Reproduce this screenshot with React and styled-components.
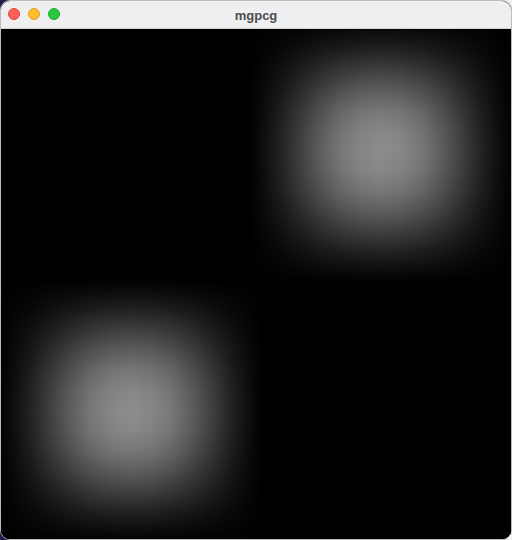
import React from 'react';
import styled, { createGlobalStyle } from 'styled-components';

const GlobalStyle = createGlobalStyle`
    html, body {
        margin: 0;
        padding: 0;
        width: 512px;
        height: 540px;
        overflow: hidden;
        background: linear-gradient(to right, #24184f 0%, #3a2a6a 20%, #d8d8dc 80%, #f2f2f4 100%);
    }
`

// density sources, canvas coords
const blobs = [
    { cx: 380, cy: 122 },
    { cx: 130, cy: 382 },
];
const R = 132;
const peak = 141;

// falloff from centre (distance, relative density)
const falloff = [
    [0, 1], [20, 0.96], [40, 0.85], [62, 0.65], [80, 0.46],
    [100, 0.25], [115, 0.12], [124, 0.05], [132, 0],
];

// mirror the falloff into gradient stops across the whole box
const stops = [
    ...falloff.slice().reverse().map(([d, v]) => [0.5 - d / (2 * R), v]),
    ...falloff.slice(1).map(([d, v]) => [0.5 + d / (2 * R), v]),
];

function grey(v) {
    const c = Math.round(v * peak);
    return `rgb(${c},${c},${c})`;
}

function App() {
    return (
        <>
            <GlobalStyle />
            <Window>
                <TitleBar>
                    <Lights>
                        <Light color="#fe5f57" border="#e0443e" />
                        <Light color="#febc2e" border="#dea123" />
                        <Light color="#28c840" border="#1aab29" />
                    </Lights>
                    <Title>mgpcg</Title>
                </TitleBar>
                <Canvas>
                    <svg width="512" height="512" viewBox="0 0 512 512">
                        <defs>
                            <linearGradient id="densX" x1="0" y1="0" x2="1" y2="0">
                                {stops.map(([o, v], i) => (
                                    <stop key={i} offset={o} stopColor={grey(v)} />
                                ))}
                            </linearGradient>
                            <linearGradient id="densY" x1="0" y1="0" x2="0" y2="1">
                                {stops.map(([o, v], i) => (
                                    <stop key={i} offset={o} stopColor="#fff" stopOpacity={v} />
                                ))}
                            </linearGradient>
                            <mask id="fadeY" maskContentUnits="objectBoundingBox" style={{ maskType: 'alpha' }}>
                                <rect width="1" height="1" fill="url(#densY)" />
                            </mask>
                        </defs>
                        <rect width="512" height="512" fill="#000" />
                        {blobs.map((b, i) => (
                            <rect
                                key={i}
                                x={b.cx - R}
                                y={b.cy - R}
                                width={2 * R}
                                height={2 * R}
                                fill="url(#densX)"
                                mask="url(#fadeY)"
                            />
                        ))}
                    </svg>
                </Canvas>
            </Window>
        </>
    );
}

const Window = styled.div`
    width: 512px;
    height: 540px;
    border-radius: 10px;
    overflow: hidden;
    background: #000;
    display: flex;
    flex-direction: column;
    box-sizing: border-box;
    border: 1px solid #bdbdc0;
`

const TitleBar = styled.div`
    position: relative;
    height: 27px;
    flex-shrink: 0;
    background: #efeff1;
    border-bottom: 1px solid #d4d4d6;
    display: flex;
    align-items: center;
    justify-content: center;
`

const Lights = styled.div`
    position: absolute;
    left: 7px;
    top: 7px;
    display: flex;
    gap: 8px;
`

const Light = styled.span`
    width: 12px;
    height: 12px;
    border-radius: 50%;
    box-sizing: border-box;
    background: ${props => props.color};
    border: 0.5px solid ${props => props.border};
`

const Title = styled.div`
    font-family: "Liberation Sans", Arial, sans-serif;
    font-weight: bold;
    font-size: 13px;
    color: #4c4c4e;
    margin-top: 1px;
`

const Canvas = styled.div`
    flex: 1;
    overflow: hidden;
    background: #000;

    svg {
        display: block;
    }
`

export default App;
